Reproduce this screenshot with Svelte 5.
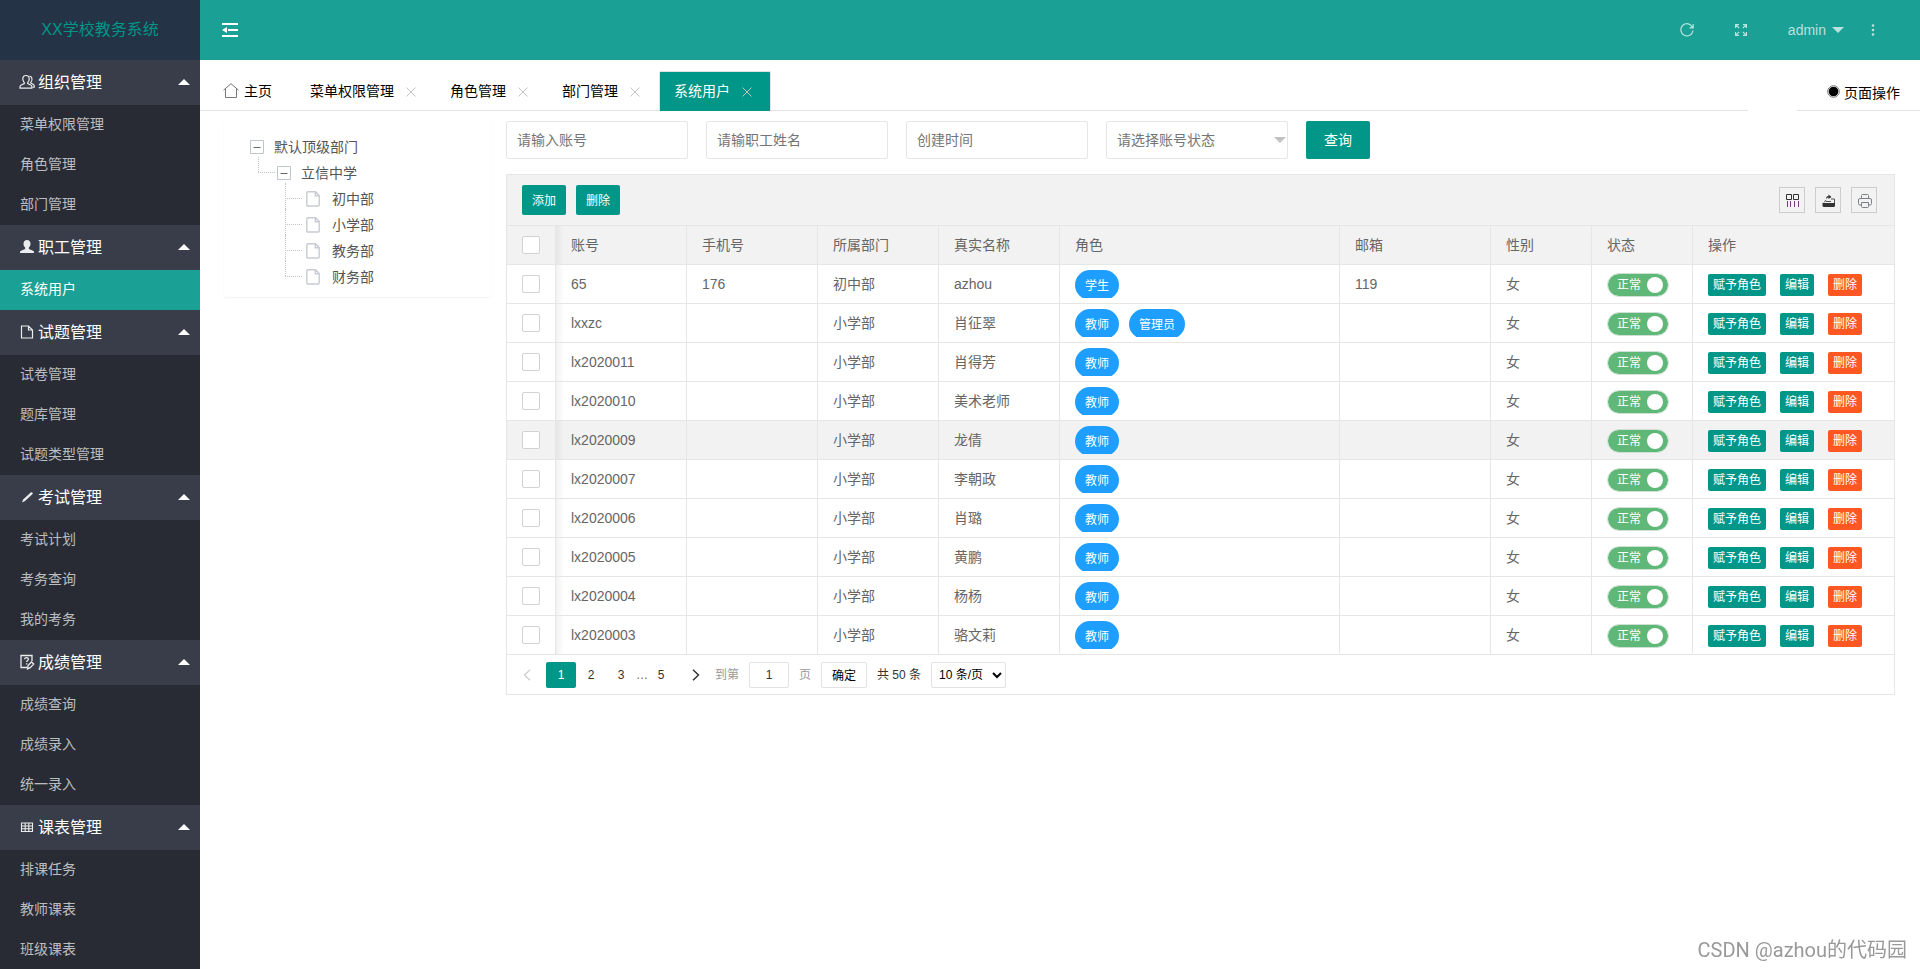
<script lang="ts">
  type MenuGroup = {
    icon: string;
    title: string;
    items: string[];
  };

  type User = {
    account: string;
    phone?: string;
    dept: string;
    name: string;
    roles: string[];
    email?: string;
  };

  const menu: MenuGroup[] = [
    { icon: "friends", title: "组织管理", items: ["菜单权限管理", "角色管理", "部门管理"] },
    { icon: "user", title: "职工管理", items: ["系统用户"] },
    { icon: "file", title: "试题管理", items: ["试卷管理", "题库管理", "试题类型管理"] },
    { icon: "pencil", title: "考试管理", items: ["考试计划", "考务查询", "我的考务"] },
    { icon: "survey", title: "成绩管理", items: ["成绩查询", "成绩录入", "统一录入"] },
    { icon: "table", title: "课表管理", items: ["排课任务", "教师课表", "班级课表"] },
  ];

  const tabs = ["菜单权限管理", "角色管理", "部门管理", "系统用户"];
  const departments = ["初中部", "小学部", "教务部", "财务部"];
  const columns = ["账号", "手机号", "所属部门", "真实名称", "角色", "邮箱", "性别", "状态", "操作"];

  const users: User[] = [
    { account: "65", phone: "176", dept: "初中部", name: "azhou", roles: ["学生"], email: "119" },
    { account: "lxxzc", dept: "小学部", name: "肖征翠", roles: ["教师", "管理员"] },
    { account: "lx2020011", dept: "小学部", name: "肖得芳", roles: ["教师"] },
    { account: "lx2020010", dept: "小学部", name: "美术老师", roles: ["教师"] },
    { account: "lx2020009", dept: "小学部", name: "龙倩", roles: ["教师"] },
    { account: "lx2020007", dept: "小学部", name: "李朝政", roles: ["教师"] },
    { account: "lx2020006", dept: "小学部", name: "肖璐", roles: ["教师"] },
    { account: "lx2020005", dept: "小学部", name: "黄鹏", roles: ["教师"] },
    { account: "lx2020004", dept: "小学部", name: "杨杨", roles: ["教师"] },
    { account: "lx2020003", dept: "小学部", name: "骆文莉", roles: ["教师"] },
  ];

  let current = $state("系统用户");
  let hovered = $state("lx2020009");
  let page = $state(1);
</script>

{#snippet menuIcon(name: string)}
  <svg class="menu__icon" viewBox="0 0 16 16" aria-hidden="true">
    {#if name === "friends"}
      <path d="M7 1.500c2 0 3.200 1.500 3.200 3.600 0 1.600-.7 2.800-1.500 3.500v1l3 1.400c.8.4 1.200 1 1.200 1.900v1.200H1v-1.200c0-.9.5-1.500 1.300-1.900l3-1.400v-1C4.400 7.900 3.800 6.700 3.800 5.100 3.800 3 5 1.500 7 1.500z" fill="none" stroke="currentColor" stroke-width="1.2" />
      <path d="M10.500 2c1.600.3 2.500 1.600 2.500 3.300 0 1.300-.5 2.300-1.200 3v.8l2.200 1.200c.8.5 1.300 1 1.300 1.900v.9h-1.800" fill="none" stroke="currentColor" stroke-width="1.1" />
    {:else if name === "user"}
      <path d="M8 1c2.200 0 3.500 1.600 3.500 3.800 0 1.700-.7 3-1.600 3.800v1.500l4.100 1.600c.7.300 1 .8 1 1.500V14H1v-.8c0-.7.3-1.200 1-1.500l4.100-1.600V8.600C5.200 7.800 4.500 6.500 4.500 4.800 4.500 2.600 5.800 1 8 1z" fill="currentColor" />
    {:else if name === "file"}
      <path d="M2.500 2h7L13.500 6v8h-11zM9.500 2v4h4" fill="none" stroke="currentColor" stroke-width="1.2" />
    {:else if name === "pencil"}
      <path d="M12 3.200a1.300 1.300 0 0 1 1.600 1.700L6 12 3 13.600l1.100-3.100z" fill="currentColor" />
    {:else if name === "survey"}
      <path d="M13 7V1.500H2v12h6" fill="none" stroke="currentColor" stroke-width="1.300" />
      <path d="M5.700 5.200c0-1 .8-1.600 1.900-1.600s1.800.6 1.800 1.500c0 1.300-1.700 1.300-1.700 2.800M7.700 9.200v1.300" fill="none" stroke="currentColor" stroke-width="1.300" />
      <path d="M9 11.500 12.500 8l2.200 2.100-3.500 3.500L8.600 14.800z" fill="none" stroke="currentColor" stroke-width="1.300" />
    {:else}
      <path d="M2.500 4h11v8.500h-11zM2.500 7h11M2.500 9.800h11M6.200 4v8.500M9.800 4v8.500" fill="none" stroke="currentColor" stroke-width="1.1" />
    {/if}
  </svg>
{/snippet}

{#snippet closeIcon()}
  <svg class="tab__close" viewBox="0 0 10 10" aria-hidden="true">
    <path d="M0.500 0.500 9.500 9.500M9.500 0.500 0.500 9.500" fill="none" stroke="currentColor" />
  </svg>
{/snippet}

{#snippet toggleIcon()}
  <svg viewBox="0 0 14 14" aria-hidden="true">
    <path d="M.5.5h13v13H.5z" fill="none" stroke="#c0c4cc" />
    <path d="M3.500 7.500h7" stroke="#666" />
  </svg>
{/snippet}

<div class="admin">
  <aside class="side">
    <div class="side__logo">XX学校教务系统</div>
    <nav class="menu">
      {#each menu as group (group.title)}
        <button type="button" class="menu__title">
          {@render menuIcon(group.icon)}
          <span>{group.title}</span>
          <i class="menu__caret"></i>
        </button>
        <div class="menu__items">
          {#each group.items as item (item)}
            <a
              href="#{item}"
              class="menu__item"
              class:menu__item--active={item === current}
              onclick={() => (current = item)}>{item}</a
            >
          {/each}
        </div>
      {/each}
    </nav>
  </aside>

  <div class="body">
    <header class="header">
      <button type="button" class="header__button header__button--fold" aria-label="侧边伸缩">
        <svg width="16" height="14" viewBox="0 0 16 14">
          <path d="M0 1h16M6 7h10M0 13h16" stroke="currentColor" stroke-width="2" />
          <path d="M0 7l5-3v6z" fill="currentColor" />
        </svg>
      </button>
      <div class="header__right">
        <button type="button" class="header__button" aria-label="刷新">
          <svg width="14" height="14" viewBox="0 0 14 14" fill="none" stroke="currentColor" stroke-width="1.2">
            <path d="M12.600 4.500A6.100 6.100 0 1 0 13 7.500M13.200 1v3.800H9.500" />
          </svg>
        </button>
        <button type="button" class="header__button" aria-label="全屏">
          <svg width="12" height="12" viewBox="0 0 12 12" fill="none" stroke="currentColor" stroke-width="1.2">
            <path d="M.6 4V.6H4M.8.8l3.400 3.400M8 .6h3.400V4M11.200.8 7.800 4.200M.6 8v3.400H4M.8 11.200l3.400-3.400M8 11.400h3.400V8M11.200 11.200 7.800 7.800" />
          </svg>
        </button>
        <button type="button" class="header__button header__button--user">
          admin <i class="header__caret"></i>
        </button>
        <button type="button" class="header__button" aria-label="更多">
          <svg width="4" height="12" viewBox="0 0 4 12" fill="currentColor">
            <circle cx="2" cy="1.500" r="1.300" />
            <circle cx="2" cy="6" r="1.300" />
            <circle cx="2" cy="10.500" r="1.300" />
          </svg>
        </button>
      </div>
    </header>

    <div class="tabbar">
      <div class="tabs">
        <button type="button" class="tab tab--home">
          <svg width="16" height="15" viewBox="0 0 16 15" fill="none" stroke="#777">
            <path d="M.5 7.200 8 .7l7.500 6.500M2.500 5.500v9h11v-9" />
          </svg>
          主页
        </button>
        {#each tabs as tab (tab)}
          <button type="button" class="tab" class:tab--active={tab === current} onclick={() => (current = tab)}>
            {tab}
            {@render closeIcon()}
          </button>
        {/each}
      </div>
      <button type="button" class="page-actions">
        <svg width="13" height="13" viewBox="0 0 13 13">
          <circle cx="6.500" cy="6.500" r="5.800" fill="none" stroke="#777" />
          <circle cx="6.500" cy="6.500" r="4.800" fill="#000" />
        </svg>
        页面操作
      </button>
    </div>

    <main class="content">
      <section class="tree">
        <div class="tree__row">
          <button type="button" class="tree__toggle" aria-label="收起">{@render toggleIcon()}</button>
          默认顶级部门
        </div>
        <ul class="tree__list">
          <li>
            <div class="tree__row">
              <button type="button" class="tree__toggle" aria-label="收起">{@render toggleIcon()}</button>
              立信中学
            </div>
            <ul class="tree__list">
              {#each departments as dept (dept)}
                <li>
                  <div class="tree__row tree__row--leaf">
                    <svg width="14" height="16" viewBox="0 0 14 16" fill="none" stroke="#c8cbd3" stroke-width="1.400">
                      <path d="M2 .8h7.500L13.200 4.500V14a1 1 0 0 1-1 1H1.800a1 1 0 0 1-1-1V2A1.200 1.200 0 0 1 2 .8zM9.300.8v3.900h3.900" />
                    </svg>
                    {dept}
                  </div>
                </li>
              {/each}
            </ul>
          </li>
        </ul>
      </section>

      <section class="users">
        <form class="search">
          <input type="text" class="search__field" placeholder="请输入账号" aria-label="账号" />
          <input type="text" class="search__field" placeholder="请输职工姓名" aria-label="职工姓名" />
          <input type="text" class="search__field" placeholder="创建时间" aria-label="创建时间" />
          <div class="search__select">
            <select class="search__field" aria-label="账号状态">
              <option>请选择账号状态</option>
              <option>正常</option>
            </select>
          </div>
          <button type="button" class="search__submit">查询</button>
        </form>

        <div class="grid">
          <div class="toolbar">
            <button type="button" class="toolbar__button">添加</button>
            <button type="button" class="toolbar__button">删除</button>
            <div class="toolbar__tools">
              <button type="button" class="toolbar__tool" aria-label="筛选列">
                <svg width="14" height="14" viewBox="0 0 14 14" fill="none">
                  <path d="M.5.5h5v5h-5zM7.500.5h5v5h-5z" stroke="#333" />
                  <path d="M1.500 7v6M4.500 7v6M8.500 7v6M12.500 7v6" stroke="#7a3a80" />
                </svg>
              </button>
              <button type="button" class="toolbar__tool" aria-label="导出">
                <svg width="14" height="14" viewBox="0 0 14 14">
                  <path d="M.5 9h12.500v2.500a1.500 1.500 0 0 1-1.500 1.500h-9.500A1.500 1.500 0 0 1 .5 11.500z" fill="#333" />
                  <path d="M2 8.500 4 6M9 5h3.500v4M4 7.500h5" fill="none" stroke="#555" />
                  <path d="M4 5.500c0-2.500 1-3.500 2.500-3.500V.5L9.500 3 6.500 5V3.600C5.200 3.600 4.500 4.500 4 5.500z" fill="#333" />
                </svg>
              </button>
              <button type="button" class="toolbar__tool" aria-label="打印">
                <svg width="14" height="14" viewBox="0 0 14 14" fill="none" stroke="#7d8288">
                  <path d="M3.500 4.500v-3a1 1 0 0 1 1-1h5a1 1 0 0 1 1 1v3M3 11H2a1.500 1.500 0 0 1-1.500-1.500V6A1.500 1.500 0 0 1 2 4.500h10A1.500 1.500 0 0 1 13.500 6v3.500A1.500 1.500 0 0 1 12 11h-1M3.500 8.500h7v4a1 1 0 0 1-1 1h-5a1 1 0 0 1-1-1z" />
                </svg>
              </button>
            </div>
          </div>

          <table class="table">
            <colgroup>
              <col class="col-check" />
              <col class="col-account" />
              <col class="col-account" />
              <col class="col-name" />
              <col class="col-name" />
              <col class="col-roles" />
              <col class="col-email" />
              <col class="col-short" />
              <col class="col-short" />
              <col />
            </colgroup>
            <thead>
              <tr>
                <th><input type="checkbox" class="check" aria-label="全选" /></th>
                {#each columns as column (column)}
                  <th>{column}</th>
                {/each}
              </tr>
            </thead>
            <tbody onmouseleave={() => (hovered = "")}>
              {#each users as user (user.account)}
                <tr class:hover={user.account === hovered} onmouseenter={() => (hovered = user.account)}>
                  <td><input type="checkbox" class="check" aria-label={user.account} /></td>
                  <td>{user.account}</td>
                  <td>{user.phone ?? ""}</td>
                  <td>{user.dept}</td>
                  <td>{user.name}</td>
                  <td>
                    <div class="roles">
                      {#each user.roles as role (role)}
                        <button type="button" class="role">{role}</button>
                      {/each}
                    </div>
                  </td>
                  <td>{user.email ?? ""}</td>
                  <td>女</td>
                  <td>
                    <label class="switch">
                      <input type="checkbox" class="switch__input" checked />
                      <span>正常</span>
                      <i class="switch__dot"></i>
                    </label>
                  </td>
                  <td>
                    <div class="actions">
                      <button type="button" class="action">赋予角色</button>
                      <button type="button" class="action">编辑</button>
                      <button type="button" class="action action--danger">删除</button>
                    </div>
                  </td>
                </tr>
              {/each}
            </tbody>
          </table>

          <div class="pager">
            <button type="button" class="pager__arrow pager__arrow--disabled" aria-label="上一页">
              <svg width="8" height="12" viewBox="0 0 8 12" fill="none" stroke="currentColor" stroke-width="1.500">
                <path d="M7 .7 1.500 6 7 11.300" />
              </svg>
            </button>
            {#each [1, 2, 3] as n (n)}
              <button type="button" class="pager__page" class:pager__page--current={n === page} onclick={() => (page = n)}>{n}</button>
            {/each}
            <span class="pager__more">…</span>
            <button type="button" class="pager__page">5</button>
            <button type="button" class="pager__arrow pager__arrow--next" aria-label="下一页">
              <svg width="8" height="12" viewBox="0 0 8 12" fill="none" stroke="currentColor" stroke-width="1.500">
                <path d="M1 .7 6.500 6 1 11.300" />
              </svg>
            </button>
            <label class="pager__skip">
              到第 <input type="text" class="pager__input" value="1" /> 页
            </label>
            <button type="button" class="pager__confirm">确定</button>
            <span class="pager__count">共 50 条</span>
            <select class="pager__limit" aria-label="每页条数">
              <option>10 条/页</option>
              <option>20 条/页</option>
            </select>
          </div>
        </div>
      </section>
    </main>
  </div>

  <div class="watermark">CSDN @azhou的代码园</div>
</div>

<style>
  :global(body) {
    background: #fff;
  }

  .admin {
    display: flex;
    height: 100vh;
    overflow: hidden;
    color: #666;
    font: 14px/24px "Liberation Sans", "Noto Sans CJK SC", sans-serif;
  }

  .admin :is(button, input, select) {
    box-sizing: border-box;
    margin: 0;
    font-family: inherit;
    border-radius: 2px;
  }

  .admin button {
    border: none;
    background: none;
    padding: 0;
    cursor: pointer;
    white-space: nowrap;
  }

  .admin svg {
    display: block;
    flex: none;
  }

  .side {
    flex: none;
    width: 200px;
    overflow-y: auto;
    scrollbar-width: none;
    background: #282b33;
  }

  .side__logo {
    height: 60px;
    line-height: 60px;
    background: #243346;
    color: #009688;
    font-size: 16px;
    text-align: center;
  }

  .admin .menu__title {
    display: flex;
    align-items: center;
    gap: 3px;
    width: 100%;
    height: 45px;
    padding: 0 10px 3px 19px;
    border-radius: 0;
    background: #393d49;
    color: #fff;
    font-size: 16px;
  }

  .menu__icon {
    width: 16px;
    height: 16px;
    margin-top: 2px;
    opacity: 0.9;
  }

  .menu__caret {
    margin: 2px 0 0 auto;
    border: 6px solid transparent;
    border-top: none;
    border-bottom-color: #fff;
  }

  .menu__item {
    display: block;
    height: 40px;
    padding-left: 20px;
    line-height: 38px;
    color: rgba(255, 255, 255, 0.7);
    text-decoration: none;
  }

  .menu__item--active {
    background: #1aa094;
    color: #fff;
  }

  .body {
    flex: 1;
    min-width: 0;
  }

  .header {
    display: flex;
    align-items: center;
    justify-content: space-between;
    height: 60px;
    padding: 0 45px 0 22px;
    background: #1aa094;
  }

  .header__right {
    display: flex;
    align-items: center;
    gap: 41px;
  }

  .admin .header__button {
    color: rgba(255, 255, 255, 0.7);
    font-size: 14px;
  }

  .admin .header__button--fold {
    color: #fff;
  }

  .admin .header__button--user {
    display: flex;
    align-items: center;
    gap: 6px;
    margin-right: -14px;
  }

  .header__caret {
    border: 6px solid transparent;
    border-bottom: none;
    border-top-color: rgba(255, 255, 255, 0.7);
  }

  .tabbar {
    display: flex;
    justify-content: space-between;
    padding-top: 11px;
    gap: 49px;
  }

  .tabs {
    display: flex;
    flex: 1;
    height: 40px;
    box-sizing: border-box;
    padding-left: 8px;
    border-bottom: 1px solid #e2e2e2;
  }

  .admin .tab {
    display: flex;
    align-items: center;
    gap: 12px;
    height: 40px;
    padding: 0 18px 3px 14px;
    border: 1px solid transparent;
    border-bottom: none;
    border-radius: 2px 2px 0 0;
    color: #000;
    font-size: 14px;
  }

  .admin .tab--home {
    gap: 5px;
    padding: 0 22px 3px 14px;
  }

  .admin .tab--active {
    border-color: #e2e2e2;
    background: #009688;
    color: #fff;
  }

  .tab__close {
    width: 10px;
    height: 10px;
    margin-top: 3px;
    color: #c2c2c2;
  }

  .admin .page-actions {
    display: flex;
    align-items: center;
    gap: 4px;
    height: 40px;
    padding: 2px 20px 0 30px;
    border-bottom: 1px solid #e2e2e2;
    border-radius: 0;
    color: #000;
    font-size: 14px;
  }

  .content {
    display: flex;
    align-items: flex-start;
    gap: 15px;
    padding: 10px 25px 0 24px;
  }

  .tree {
    flex: none;
    box-sizing: border-box;
    width: 267px;
    padding: 13px 26px 7px;
    border-radius: 2px;
    box-shadow: 0 1px 2px rgba(0, 0, 0, 0.06);
    color: #555;
  }

  .tree__row {
    display: flex;
    align-items: center;
    gap: 10px;
    height: 26px;
  }

  .tree__toggle {
    width: 14px;
    height: 14px;
  }

  .tree__list {
    margin: 0;
    padding: 0 0 0 8px;
    list-style: none;
  }

  .tree__list li {
    position: relative;
    padding-left: 19px;
  }

  .tree__row--leaf {
    gap: 12px;
    padding-left: 2px;
  }

  .tree__list li::before {
    content: "";
    position: absolute;
    top: -3px;
    bottom: 3px;
    left: 0;
    border-left: 1px dotted #c0c4cc;
  }

  .tree__list li:last-child::before {
    bottom: auto;
    height: 15px;
  }

  .tree__list li::after {
    content: "";
    position: absolute;
    top: 12px;
    left: 0;
    width: 17px;
    border-top: 1px dotted #c0c4cc;
  }

  .users {
    flex: 1;
    min-width: 0;
  }

  .search {
    display: flex;
    gap: 18px;
    margin-bottom: 15px;
  }

  .search__field {
    width: 182px;
    height: 38px;
    padding: 0 10px 1px;
    border: 1px solid #e6e6e6;
    background: #fff;
    color: #757575;
    font-size: 14px;
    appearance: none;
  }

  .search__field::placeholder {
    color: #757575;
  }

  .search__select {
    position: relative;
  }

  .search__select::after {
    content: "";
    position: absolute;
    top: 16px;
    right: 2px;
    border: 6px solid transparent;
    border-bottom: none;
    border-top-color: #c2c2c2;
    pointer-events: none;
  }

  .admin .search__submit {
    width: 64px;
    height: 38px;
    padding-bottom: 2px;
    background: #009688;
    color: #fff;
    font-size: 14px;
  }

  .grid {
    border: 1px solid #e6e6e6;
  }

  .toolbar {
    display: flex;
    align-items: center;
    gap: 10px;
    height: 50px;
    padding: 0 17px 0 15px;
    border-bottom: 1px solid #e6e6e6;
    background: #f2f2f2;
  }

  .admin .toolbar__button {
    height: 30px;
    padding: 0 10px 2px;
    background: #009688;
    color: #fff;
    font-size: 12px;
  }

  .toolbar__tools {
    display: flex;
    gap: 10px;
    margin-left: auto;
  }

  .admin .toolbar__tool {
    display: flex;
    align-items: center;
    justify-content: center;
    width: 26px;
    height: 26px;
    padding: 2px 0 0 2px;
    border: 1px solid #ccc;
    border-radius: 0;
  }

  .table {
    width: 100%;
    border-collapse: separate;
    border-spacing: 0;
    table-layout: fixed;
  }

  .col-check {
    width: 49px;
  }

  .col-account {
    width: 131px;
  }

  .col-name {
    width: 121px;
  }

  .col-roles {
    width: 280px;
  }

  .col-email {
    width: 151px;
  }

  .col-short {
    width: 101px;
  }

  .table th,
  .table td {
    box-sizing: border-box;
    height: 39px;
    padding: 0 15px;
    border-right: 1px solid #e6e6e6;
    border-bottom: 1px solid #e6e6e6;
    font-weight: 400;
    text-align: left;
    white-space: nowrap;
  }

  .table th:last-child,
  .table td:last-child {
    border-right: none;
  }

  .table th {
    background-color: #f2f2f2;
  }

  .table th:nth-child(2),
  .table td:nth-child(2) {
    background-image: linear-gradient(to right, rgba(0, 0, 0, 0.05), transparent 8px);
  }

  .hover {
    background: #f2f2f2;
  }

  .check {
    display: block;
    width: 18px;
    height: 18px;
    border: 1px solid #d2d2d2;
    background: #fff;
    appearance: none;
  }

  .check:checked {
    border-color: #5fb878;
    background: #5fb878;
  }

  .roles {
    display: flex;
    gap: 10px;
    height: 28px;
    overflow: hidden;
  }

  .admin .role {
    height: 30px;
    padding: 0 10px 2px;
    border-radius: 15px;
    background: #1e9fff;
    color: #fff;
    font-size: 12px;
  }

  .switch {
    display: flex;
    align-items: center;
    justify-content: space-between;
    box-sizing: border-box;
    width: 62px;
    height: 24px;
    margin-top: 1px;
    padding: 0 5px 0 9px;
    border: 1px solid #cfe0d4;
    border-radius: 12px;
    background: #5fb878;
    background-clip: padding-box;
    color: #fff;
    font-size: 12px;
    line-height: 22px;
  }

  .switch__input {
    position: absolute;
    opacity: 0;
  }

  .switch__dot {
    width: 16px;
    height: 16px;
    border-radius: 50%;
    background: #fff;
  }

  .actions {
    display: flex;
    gap: 14px;
    padding-top: 2px;
  }

  .admin .action {
    height: 22px;
    padding: 0 5px;
    background: #009688;
    color: #fff;
    font-size: 12px;
    line-height: 22px;
  }

  .admin .action--danger {
    background: #ff5722;
  }

  .pager {
    display: flex;
    align-items: center;
    height: 26px;
    padding: 7px 0 6px 8px;
    color: #333;
    font-size: 12px;
  }

  .admin .pager__arrow {
    display: flex;
    align-items: center;
    justify-content: center;
    width: 31px;
    height: 26px;
    color: #333;
  }

  .admin .pager__arrow--disabled {
    width: 24px;
    margin-right: 7px;
    color: #d2d2d2;
  }

  .admin .pager__arrow--next {
    margin-left: 4px;
  }

  .admin .pager__page {
    width: 30px;
    height: 26px;
    padding-bottom: 1px;
    color: #333;
    font-size: 12px;
  }

  .admin .pager__page--current {
    background: #009688;
    color: #fff;
  }

  .pager__more {
    width: 10px;
    color: #666;
    text-align: center;
  }

  .pager__skip {
    display: flex;
    align-items: center;
    gap: 10px;
    margin-left: 4px;
    color: #999;
  }

  .pager__input {
    width: 40px;
    height: 26px;
    padding: 0;
    border: 1px solid #e2e2e2;
    color: #333;
    font-size: 12px;
    text-align: center;
  }

  .admin .pager__confirm {
    width: 46px;
    height: 26px;
    margin: 0 10px;
    padding-bottom: 1px;
    border: 1px solid #e2e2e2;
    color: #000;
    font-size: 12px;
  }

  .pager__limit {
    width: 75px;
    height: 26px;
    padding: 0 3px;
    border: 1px solid #e2e2e2;
    background: #fff;
    color: #000;
    font-size: 12px;
  }

  .pager__count {
    margin-right: 10px;
  }

  .watermark {
    position: fixed;
    right: 13px;
    bottom: 6px;
    color: #999;
    font-family: Roboto, "Noto Sans CJK SC", sans-serif;
    font-size: 20px;
    line-height: 26px;
    text-shadow: 1px 1px 1px #fff;
  }
</style>
